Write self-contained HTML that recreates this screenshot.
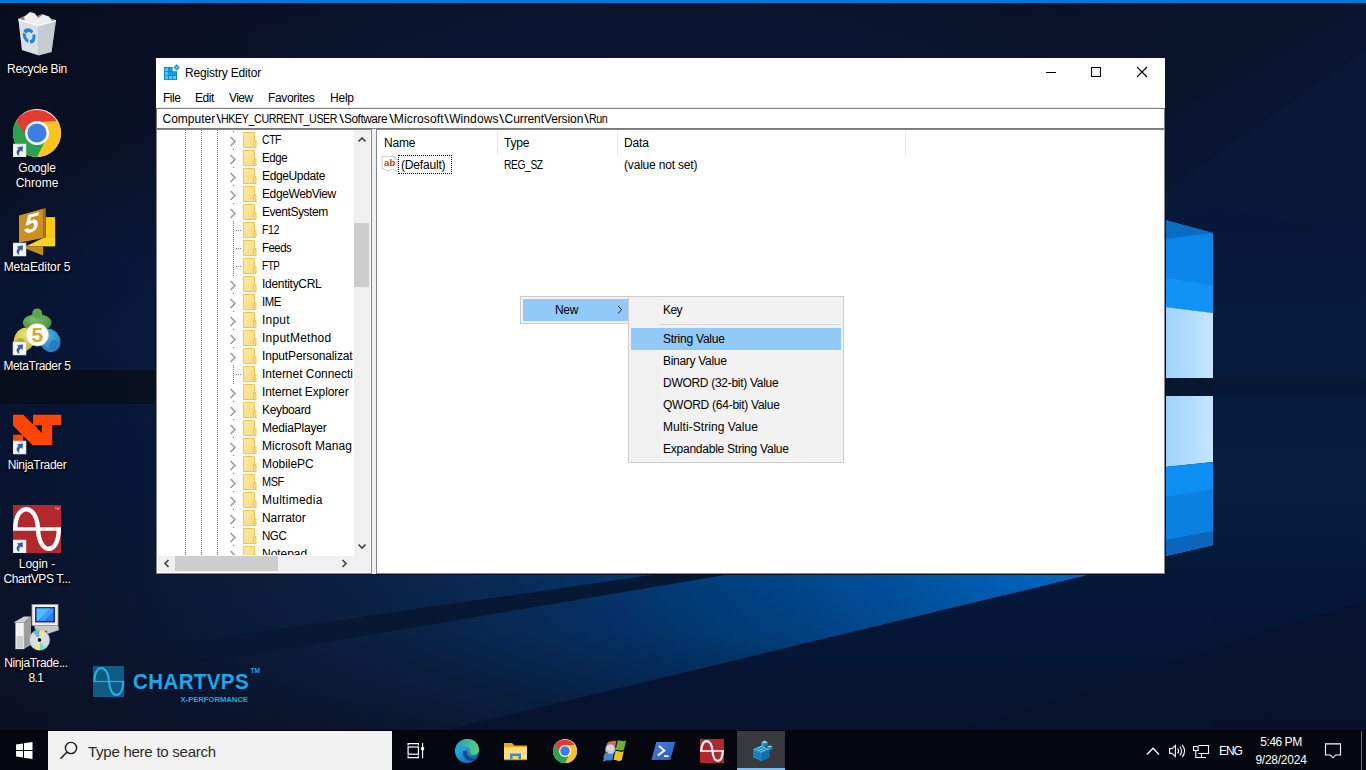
<!DOCTYPE html>
<html lang="en">
<head>
<meta charset="utf-8">
<title>Registry Editor</title>
<style>
html,body{margin:0;padding:0;}
html{width:1366px;height:770px;overflow:hidden;}
body{width:1366px;height:770px;overflow:hidden;position:relative;background:#0a1530;font-family:"Liberation Sans",sans-serif;font-size:12px;color:#000;letter-spacing:-0.18px;}
.abs{position:absolute;}
#wall{position:absolute;left:0;top:0;width:1366px;height:770px;}
#topbar{position:absolute;left:0;top:0;width:1366px;height:3px;background:#0078d4;}
/* desktop icons */
.dlabel{position:absolute;width:90px;text-align:center;color:#fff;font-size:12px;line-height:15px;text-shadow:0 1px 2px rgba(0,0,0,.9),0 0 3px rgba(0,0,0,.8),1px 1px 1px rgba(0,0,0,.9);letter-spacing:-0.1px;}
.dicon{position:absolute;}
/* window */
#win{position:absolute;left:155px;top:57px;width:1011px;height:518px;background:#fff;box-sizing:border-box;border:1px solid #10131c;}
#title{position:absolute;left:185px;top:64px;height:18px;line-height:18px;font-size:12px;}
.menu{position:absolute;top:89px;height:18px;line-height:18px;}
#addr{position:absolute;left:156px;top:108px;width:1009px;height:21px;box-sizing:border-box;border:1px solid #7a7a7a;background:#fff;}
#addr b{position:absolute;top:1px;line-height:19px;white-space:nowrap;font-weight:normal;transform-origin:0 50%;}
#addr b.bs{transform:scaleX(1.4);transform-origin:50% 50%;}
.pane{position:absolute;top:129px;height:445px;box-sizing:border-box;border:1px solid #828790;background:#fff;}
/* tree */
#tree{position:absolute;left:157px;top:130px;width:197px;height:425px;overflow:hidden;background:#fff;}
.row{position:absolute;left:0;height:18px;line-height:18px;white-space:nowrap;width:197px;overflow:hidden;}
.row span{position:absolute;left:105px;top:0;transform-origin:0 50%;}
.row svg.f{position:absolute;left:86px;top:1px;}
.row svg.c{position:absolute;left:72px;top:5px;}
.vd{position:absolute;top:0;width:1px;height:426px;background-image:linear-gradient(#7a7a7a 50%,transparent 50%);background-size:1px 2px;}
.cv{position:absolute;left:70px;top:1px;width:13px;height:16px;background:#fff;}
.hd{position:absolute;height:1px;width:6px;background-image:linear-gradient(90deg,#7a7a7a 50%,transparent 50%);background-size:2px 1px;}
/* scrollbars */
.sb{position:absolute;background:#f0f0f0;}
.th{position:absolute;background:#cdcdcd;}
/* list */
.hdr{position:absolute;top:134px;height:18px;line-height:18px;}
.hsep{position:absolute;top:131px;width:1px;height:24px;background:#e5e5e5;}
.cell{position:absolute;top:156px;height:18px;line-height:18px;white-space:nowrap;}
/* context menu */
.cm{position:absolute;background:#f2f2f2;border:1px solid #ccc;box-sizing:border-box;}
.mi{position:absolute;height:22px;line-height:22px;white-space:nowrap;}
.hl{position:absolute;background:#91c9f7;}
/* taskbar */
#tb{position:absolute;left:0;top:730px;width:1366px;height:40px;background:#04070d;}
#search{position:absolute;left:48px;top:731px;width:344px;height:39px;background:#f2f2f2;}
#search span{position:absolute;left:40px;top:1px;line-height:40px;font-size:15px;color:#2b2b2b;letter-spacing:-0.25px;}
.tray{position:absolute;color:#fff;font-size:12px;white-space:nowrap;letter-spacing:-0.2px;}
</style>
</head>
<body>
<svg id="wall" viewBox="0 0 1366 770" width="1366" height="770">
<defs>
<linearGradient id="bg" x1="0" y1="0" x2="0" y2="770" gradientUnits="userSpaceOnUse">
<stop offset="0" stop-color="#090e20"/><stop offset="0.19" stop-color="#0a1229"/><stop offset="0.26" stop-color="#0a1531"/><stop offset="0.34" stop-color="#09183a"/><stop offset="0.43" stop-color="#081a3c"/><stop offset="0.6" stop-color="#08183a"/><stop offset="0.73" stop-color="#0a1836"/><stop offset="0.95" stop-color="#0a1428"/>
</linearGradient>
<linearGradient id="leftdark" x1="0" y1="0" x2="160" y2="0" gradientUnits="userSpaceOnUse">
<stop offset="0" stop-color="#060a18" stop-opacity=".35"/><stop offset="1" stop-color="#060a18" stop-opacity="0"/>
</linearGradient>
<linearGradient id="beam" x1="1212" y1="0" x2="0" y2="0" gradientUnits="userSpaceOnUse">
<stop offset="0" stop-color="#0078dc"/><stop offset="0.105" stop-color="#0068c6"/><stop offset="0.175" stop-color="#005fb6"/><stop offset="0.257" stop-color="#00529f"/><stop offset="0.34" stop-color="#00478c"/><stop offset="0.422" stop-color="#013d7b"/><stop offset="0.505" stop-color="#053369"/><stop offset="0.587" stop-color="#082b58"/><stop offset="0.67" stop-color="#0a244a"/><stop offset="0.752" stop-color="#0a1e40"/><stop offset="0.876" stop-color="#0a1834"/><stop offset="1" stop-color="#0a132a"/>
</linearGradient>
<linearGradient id="beamshade" x1="0" y1="574" x2="0" y2="740" gradientUnits="userSpaceOnUse">
<stop offset="0" stop-color="#0a1022" stop-opacity="0"/><stop offset="0.35" stop-color="#0a1022" stop-opacity=".12"/><stop offset="0.7" stop-color="#0a1022" stop-opacity=".45"/><stop offset="1" stop-color="#0a1022" stop-opacity=".72"/>
</linearGradient>
<linearGradient id="right" x1="0" y1="200" x2="0" y2="730" gradientUnits="userSpaceOnUse">
<stop offset="0" stop-color="#08173a"/><stop offset="0.25" stop-color="#051a3c"/><stop offset="0.55" stop-color="#051d3e"/><stop offset="0.72" stop-color="#051839"/><stop offset="1" stop-color="#07112c"/>
</linearGradient>
<linearGradient id="rdark" x1="1000" y1="0" x2="1200" y2="0" gradientUnits="userSpaceOnUse"><stop offset="0" stop-color="#0a142d" stop-opacity="0"/><stop offset="1" stop-color="#0a142d" stop-opacity="1"/></linearGradient>
<linearGradient id="under" x1="0" y1="560" x2="0" y2="730" gradientUnits="userSpaceOnUse">
<stop offset="0" stop-color="#05193b"/><stop offset="1" stop-color="#07122e"/>
</linearGradient>
<linearGradient id="lite" x1="1165" y1="0" x2="1213" y2="0" gradientUnits="userSpaceOnUse">
<stop offset="0" stop-color="#9fd2fb"/><stop offset="1" stop-color="#c4e6ff"/>
</linearGradient>
<linearGradient id="stripe" x1="731" y1="0" x2="100" y2="0" gradientUnits="userSpaceOnUse">
<stop offset="0" stop-color="#061228" stop-opacity=".9"/><stop offset="0.5" stop-color="#061228" stop-opacity=".7"/><stop offset="1" stop-color="#061228" stop-opacity="0"/>
</linearGradient>
<radialGradient id="glowtop" cx="660" cy="45" r="540" gradientUnits="userSpaceOnUse" gradientTransform="translate(0,36) scale(1,0.2)">
<stop offset="0" stop-color="#0b1b40" stop-opacity="0.6"/><stop offset="0.5" stop-color="#0b1b40" stop-opacity="0.42"/><stop offset="1" stop-color="#0b1c42" stop-opacity="0"/>
</radialGradient>
</defs>
<rect width="1366" height="770" fill="url(#bg)"/>
<rect width="1366" height="180" fill="url(#glowtop)"/>
<rect x="0" y="370" width="1165" height="34" fill="#07101f"/>
<rect x="0" y="0" width="160" height="770" fill="url(#leftdark)"/>
<!-- right side -->
<polygon points="1165,200 1366,237 1366,730 1165,730" fill="url(#right)"/>
<polygon points="1000,0 1366,0 1366,237 1165,200 1000,200" fill="url(#rdark)"/>
<polygon points="1165,190 1366,50 1366,237 1165,200" fill="#0b1c44" opacity=".45"/>
<polygon points="1165,120 1366,3 1366,50 1165,190" fill="#0b1a3e" opacity=".25"/>
<rect x="1213" y="378" width="153" height="18" fill="#06142d" opacity=".4"/>
<!-- beam -->
<polygon points="1212,545 0,838 0,560 1212,470" fill="url(#beam)"/>
<polygon points="1212,545 0,838 0,560 1212,470" fill="url(#beamshade)"/>
<polygon points="658,574 731,574 0,697 0,669" fill="url(#stripe)"/>
<polygon points="1084,576 1213,545 1213,730 446,730" fill="url(#under)"/>
<polygon points="1366,600 1366,730 960,730" fill="#08122b" opacity=".6"/>
<!-- logo panes -->
<polygon points="1165,220 1213,233 1213,313 1165,307" fill="#0b86e8"/>
<polygon points="1165,220 1213,233 1165,239" fill="#0a6cc4"/>
<polygon points="1165,278 1213,285 1213,313 1165,307" fill="#1192f6"/>
<polygon points="1165,307 1213,313 1213,378 1165,378" fill="url(#lite)"/>
<rect x="1165" y="378" width="48" height="18" fill="#08162f"/>
<polygon points="1165,396 1213,396 1213,462 1165,467" fill="url(#lite)"/>
<polygon points="1165,467 1213,462 1213,545 1165,556" fill="#0c8ef2"/>
<polygon points="1165,497 1213,489 1213,545 1165,556" fill="#0a80e0"/>
<polygon points="1165,540 1213,531 1213,545 1165,556" fill="#0a66ba"/>
</svg>
<div id="topbar"></div>
<!-- shortcut arrow symbol -->
<svg width="0" height="0" style="position:absolute">
<defs>
<g id="sc"><rect x="0" y="0" width="13" height="13" fill="#f6f6f6" stroke="#d0d0d0" stroke-width=".6"/><path d="M3.9 3.4 L9.9 2.2 L9.6 8.1 L7.9 6.4 C6.3 7.6 5.6 9.6 6.3 11.9 C3 10.2 2.6 6.9 5.6 4.9 Z" fill="#2c5fae"/></g>
<linearGradient id="fold" x1="0" y1="0" x2="1" y2="1"><stop offset="0" stop-color="#fde9a4"/><stop offset="1" stop-color="#fbdc7c"/></linearGradient>
</defs>
</svg>

<!-- Recycle Bin -->
<svg class="dicon" style="left:13px;top:8px" width="48" height="50" viewBox="13 8 48 50">
<polygon points="18.5,18.5 29,14 33,12.5 37,16 42,14 47,17 56,20 51.5,52 38.7,55.5 22,50" fill="#e9ebee" opacity=".55"/>
<polygon points="24,17 30,12 35,13.5 38,18 43,14.5 49,16.5 52,21 39,25 25,21" fill="#eceef1"/>
<polygon points="18.3,18.8 38.7,24.5 38.7,55.3 22,50" fill="#e4e6ea" opacity=".92"/>
<polygon points="38.7,24.5 56,20 51.5,52 38.7,55.3" fill="#d0d3d9" opacity=".9"/>
<polygon points="18.3,18.8 38.7,24.5 56,20 55.6,21.6 38.7,26.2 18.6,20.4" fill="#fafafa"/>
<g fill="none" stroke="#1c86e4" stroke-width="3.3" transform="translate(29.2 35.9) skewY(13) scale(.92 1.08) translate(-29.2 -35.9)"><path d="M24.40 33.66 A5.3 5.3 0 0 1 32.61 31.84"/><path d="M34.00 33.66 A5.3 5.3 0 0 1 30.12 41.12"/><path d="M28.28 41.12 A5.3 5.3 0 0 1 24.08 34.53"/></g>
</svg>
<div class="dlabel" style="left:-8px;top:62px;letter-spacing:-0.32px">Recycle Bin</div>

<!-- Chrome -->
<svg class="dicon" style="left:13px;top:109px" width="48" height="48" viewBox="0 0 48 48">
<circle cx="24" cy="24" r="24" fill="#fff"/>
<path d="M24 13 L44.3 13 A24 24 0 0 0 3.2 12 L13.5 29.5 Z" fill="#e33b2e"/>
<path d="M33.5 29.5 L23.4 47.99 A24 24 0 0 0 44.8 12 L24 13 Z" fill="#fcc31e"/>
<path d="M14.5 29.5 L3.2 12 A24 24 0 0 0 24 48 L33.5 29.5 Z" fill="#2aa24b"/>
<circle cx="24" cy="24" r="12" fill="#fff"/>
<circle cx="24" cy="24" r="9.6" fill="#3b7ee6"/>
<use href="#sc" x="0" y="35"/>
</svg>
<div class="dlabel" style="left:-8px;top:161px"><span style="letter-spacing:-0.2px">Google</span><br><span style="letter-spacing:0">Chrome</span></div>

<!-- MetaEditor 5 -->
<svg class="dicon" style="left:13px;top:206px" width="48" height="52" viewBox="13 206 48 52">
<rect x="45.7" y="217.1" width="9.4" height="29.1" fill="#f8c90e"/>
<polygon points="26,246.2 43.1,237.9 55.1,237.9 55.1,246.2" fill="#fbd22c"/>
<polygon points="26,246.2 43.1,246.2 43.1,255.6 26,248.8" fill="#c98d16"/>
<polygon points="43.1,208.8 45.7,208.1 45.7,238 43.1,238" fill="#ad7614"/>
<polygon points="19,215.6 43.1,208.8 43.1,237.9 19,242.8" fill="#cd8f1e"/>
<text x="31.6" y="232" font-family="Liberation Sans,sans-serif" font-weight="bold" font-style="italic" font-size="26" fill="#fff" text-anchor="middle" transform="translate(31.6 226) skewY(-14) translate(-31.6 -226)" letter-spacing="0">5</text>
<use href="#sc" x="13" y="243"/>
</svg>
<div class="dlabel" style="left:-8px;top:260px;letter-spacing:-0.12px">MetaEditor 5</div>

<!-- MetaTrader 5 -->
<svg class="dicon" style="left:11px;top:306px" width="52" height="52" viewBox="11 306 52 52">
<defs><radialGradient id="mg" cx=".4" cy=".3" r=".8"><stop offset="0" stop-color="#7cbc68"/><stop offset="1" stop-color="#3f8a34"/></radialGradient>
<radialGradient id="my" cx=".4" cy=".3" r=".8"><stop offset="0" stop-color="#ece46c"/><stop offset="1" stop-color="#bdb034"/></radialGradient>
<radialGradient id="mb" cx=".5" cy=".3" r=".8"><stop offset="0" stop-color="#48b4ec"/><stop offset="1" stop-color="#1c72b4"/></radialGradient></defs>
<ellipse cx="24.4" cy="339.5" rx="10.2" ry="12.4" fill="url(#my)" transform="rotate(28 24.4 339.5)"/>
<circle cx="20.8" cy="342.6" r="4.4" fill="#b3a638"/>
<ellipse cx="49.9" cy="340.5" rx="10.2" ry="12" fill="url(#mb)" transform="rotate(-28 49.9 340.5)"/>
<circle cx="54" cy="344.7" r="4.6" fill="#2a7cbc"/>
<ellipse cx="37.2" cy="322.6" rx="14.3" ry="8.6" fill="url(#mg)"/>
<circle cx="37.2" cy="313.4" r="5" fill="#5aa64a"/>
<circle cx="37.2" cy="334.8" r="11.3" fill="#fff" stroke="#e0c890" stroke-width=".7"/>
<text x="37.4" y="342.4" font-family="Liberation Sans,sans-serif" font-weight="bold" font-size="21" fill="#e2a224" text-anchor="middle" letter-spacing="0">5</text>
<use href="#sc" x="13" y="342"/>
</svg>
<div class="dlabel" style="left:-8px;top:359px;letter-spacing:-0.37px">MetaTrader 5</div>

<!-- NinjaTrader -->
<svg class="dicon" style="left:13px;top:412px" width="49" height="46" viewBox="13 412 49 46">
<path fill-rule="evenodd" d="M13.05 414.7 H23.3 L33.1 424.5 V414.7 H61.3 V425.1 H52.2 V445 H32.4 L23 435.6 V445 H13.05 V434.7 H22.1 L13.05 425.6 Z M34.4 425.3 H41.8 V432.9 Z" fill="#ff4503"/>
<use href="#sc" x="13" y="441"/>
</svg>
<div class="dlabel" style="left:-8px;top:458px;letter-spacing:-0.32px">NinjaTrader</div>

<!-- ChartVPS login -->
<svg class="dicon" style="left:13px;top:505px" width="48" height="48" viewBox="0 0 48 48">
<rect width="48" height="48" fill="#b3282d"/>
<path d="M0 24 H48" stroke="#fff" stroke-width="3.4" fill="none"/>
<path d="M2.2 24 C2.2 -2.4 24 -2.4 25 24 C26 50.4 45.8 50.4 45.8 24" stroke="#fff" stroke-width="4.4" fill="none"/>
<text x="44" y="5.2" font-size="3.6" fill="#f0c0c0" text-anchor="middle" font-family="Liberation Sans,sans-serif">TM</text>
<use href="#sc" x="0" y="35"/>
</svg>
<div class="dlabel" style="left:-8px;top:557px"><span style="letter-spacing:-0.05px">Login -</span><br><span style="letter-spacing:-0.43px">ChartVPS T...</span></div>

<!-- NinjaTrader installer -->
<svg class="dicon" style="left:13px;top:603px" width="48" height="50" viewBox="13 603 48 50">
<polygon points="13.5,622.5 24,616.5 31,616.5 24,622.5" fill="#cfcfcf"/>
<polygon points="24,622.5 31,616.5 31,645 24,649" fill="#9c9c9c"/>
<rect x="15.5" y="622.5" width="8.5" height="26.5" fill="#f2f2f2" stroke="#a8a8a8" stroke-width=".5"/>
<rect x="16.5" y="636" width="6.5" height="12" fill="#cfcfcf"/>
<rect x="32" y="604.5" width="26" height="21" fill="#f0f0f0" stroke="#9a9a9a" stroke-width=".8"/>
<rect x="35" y="607" width="20" height="15.5" fill="#2424a8"/>
<rect x="36.6" y="608.4" width="16.8" height="12.6" fill="#2a7cf0"/>
<polygon points="36.6,608.4 50,608.4 38,621 36.6,621" fill="#4ad0f4" opacity=".85"/>
<polygon points="45,608.4 53.4,608.4 53.4,612 44,621 40,621" fill="#5ab4f8" opacity=".5"/>
<polygon points="34,625.5 58,625.5 59,630 47,634 47,631 36,631" fill="#c8c8c8" stroke="#8a8a8a" stroke-width=".5"/>
<circle cx="39.5" cy="640" r="10.2" fill="#d9dce2" stroke="#9a9ea6" stroke-width=".7"/>
<path d="M39.5 640 L33 632 A10.2 10.2 0 0 1 39.5 629.8 Z" fill="#58b8e8"/>
<path d="M39.5 640 L39.5 629.8 A10.2 10.2 0 0 1 45 631.4 Z" fill="#f0e878"/>
<path d="M39.5 640 L45.5 648.2 A10.2 10.2 0 0 1 39.5 650.2 Z" fill="#70e0d0"/>
<path d="M39.5 640 L39.5 650.2 A10.2 10.2 0 0 1 35 649.1 Z" fill="#f0e878"/>
<circle cx="39.5" cy="640" r="3" fill="#f4f4f4"/>
<circle cx="39.5" cy="640" r="1.9" fill="#111"/>
</svg>
<div class="dlabel" style="left:-9px;top:656px"><span style="letter-spacing:-0.35px">NinjaTrade...</span><br><span style="letter-spacing:-0.6px">8.1</span></div>

<!-- ChartVPS watermark -->
<svg class="abs" style="left:90px;top:662px" width="176" height="44" viewBox="90 662 176 44">
<rect x="93" y="666" width="31" height="31" fill="#0f5a80"/>
<path d="M93.5 681.5 H124" stroke="#22b0ee" stroke-width="1.3" fill="none"/>
<path d="M94.3 681.5 C94.3 663.5 108 663.5 109 681.5 C110 699.5 123.3 699.5 123.3 681.5" stroke="#22b0ee" stroke-width="2" fill="none"/>
<text x="133" y="689" font-family="Liberation Sans,sans-serif" font-weight="bold" font-size="21.5" fill="#1ea7e6" letter-spacing="0.4" textLength="116" lengthAdjust="spacingAndGlyphs">CHARTVPS</text>
<text x="250.5" y="672.5" font-family="Liberation Sans,sans-serif" font-weight="bold" font-size="6.5" fill="#1ea7e6" letter-spacing="0">TM</text>
<text x="180.5" y="702" font-family="Liberation Sans,sans-serif" font-weight="bold" font-size="7.2" fill="#1ea7e6" letter-spacing="0" textLength="67.5" lengthAdjust="spacingAndGlyphs">X-PERFORMANCE</text>
</svg>
<div id="win"></div>
<svg class="abs" style="left:163px;top:63px" width="18" height="18" viewBox="0 0 18 18">
<path d="M1 4 H9.6 V8.2 H14 V17 H1 Z" fill="#0b86cf"/>
<g fill="#53c9f7"><rect x="2" y="5" width="3.1" height="3.1"/><rect x="2" y="9.1" width="3.1" height="3.1"/><rect x="2" y="13.1" width="3.1" height="3.1"/><rect x="6" y="13.1" width="3.1" height="3.1"/><rect x="10" y="13.1" width="3.1" height="3.1"/></g>
<g fill="#0ea2e2"><rect x="6" y="5" width="3.1" height="3.1"/><rect x="6" y="9.1" width="3.1" height="3.1"/><rect x="10" y="9.1" width="3.1" height="3.1"/></g>
<rect x="11.9" y="2.7" width="3.4" height="3.4" transform="rotate(45 13.6 4.4)" fill="#53c9f7" stroke="#0b86cf" stroke-width="1"/>
</svg>
<div id="title">Registry Editor</div>
<svg class="abs" style="left:1040px;top:62px" width="116" height="20" viewBox="1040 62 116 20">
<path d="M1046 72.5 H1056" stroke="#000" stroke-width="1" fill="none"/>
<rect x="1091.5" y="67.5" width="9" height="9" stroke="#000" stroke-width="1" fill="none"/>
<path d="M1137 67 L1147 77 M1147 67 L1137 77" stroke="#000" stroke-width="1.1" fill="none"/>
</svg>
<div class="menu" style="left:163px;letter-spacing:-0.5px">File</div>
<div class="menu" style="left:195px;letter-spacing:-0.45px">Edit</div>
<div class="menu" style="left:229px;letter-spacing:-0.55px">View</div>
<div class="menu" style="left:268px;letter-spacing:-0.33px">Favorites</div>
<div class="menu" style="left:330px;letter-spacing:-0.23px">Help</div>
<div class="abs" style="left:156px;top:107px;width:1009px;height:1px;background:#f0f0f0"></div>
<div id="addr"><b style="left:5.5px;letter-spacing:0.00px">Computer</b><b class="bs" style="left:59.8px">\</b><b style="left:64.4px;letter-spacing:-0.45px;transform:scaleX(0.891)">HKEY_CURRENT_USER</b><b class="bs" style="left:182.6px">\</b><b style="left:187.1px;letter-spacing:-0.45px;transform:scaleX(0.984)">Software</b><b class="bs" style="left:232.5px">\</b><b style="left:236.8px;letter-spacing:0.14px">Microsoft</b><b class="bs" style="left:288.4px">\</b><b style="left:292.2px;letter-spacing:0.09px">Windows</b><b class="bs" style="left:343.2px">\</b><b style="left:347.6px;letter-spacing:-0.10px">CurrentVersion</b><b class="bs" style="left:427.9px">\</b><b style="left:432.3px;letter-spacing:-0.45px;transform:scaleX(0.890)">Run</b></div>
<div class="abs" style="left:156px;top:129px;width:1009px;height:445px;background:#f0f0f0"></div>
<div class="pane" style="left:156px;width:216px"></div>
<div class="pane" style="left:376px;width:789px"></div>
<div id="tree">
<div class="vd" style="left:28px"></div>
<div class="vd" style="left:44px"></div>
<div class="vd" style="left:60px"></div>
<div class="vd" style="left:76px;top:1px"></div>
<div class="row" style="top:1px"><i class="cv"></i><svg class="c" width="8" height="11" viewBox="0 0 8 11"><path d="M1.5 1 L6 5.5 L1.5 10" stroke="#a0a0a0" stroke-width="1.7" fill="none"/></svg><svg class="f" width="14" height="17" viewBox="0 0 14 17"><path d="M.5 .5 H11.5 V8.5 H13 V15.5 H.5 Z" fill="url(#fold)" stroke="#f0c64c" stroke-width="1"/><path d="M10.5 15 V9 H12.5" stroke="#f0c64c" stroke-width="1" fill="none"/></svg><span style="letter-spacing:-0.45px;transform:scaleX(0.869)">CTF</span></div>
<div class="row" style="top:19px"><i class="cv"></i><svg class="c" width="8" height="11" viewBox="0 0 8 11"><path d="M1.5 1 L6 5.5 L1.5 10" stroke="#a0a0a0" stroke-width="1.7" fill="none"/></svg><svg class="f" width="14" height="17" viewBox="0 0 14 17"><path d="M.5 .5 H11.5 V8.5 H13 V15.5 H.5 Z" fill="url(#fold)" stroke="#f0c64c" stroke-width="1"/><path d="M10.5 15 V9 H12.5" stroke="#f0c64c" stroke-width="1" fill="none"/></svg><span style="letter-spacing:-0.45px;transform:scaleX(0.959)">Edge</span></div>
<div class="row" style="top:37px"><i class="cv"></i><svg class="c" width="8" height="11" viewBox="0 0 8 11"><path d="M1.5 1 L6 5.5 L1.5 10" stroke="#a0a0a0" stroke-width="1.7" fill="none"/></svg><svg class="f" width="14" height="17" viewBox="0 0 14 17"><path d="M.5 .5 H11.5 V8.5 H13 V15.5 H.5 Z" fill="url(#fold)" stroke="#f0c64c" stroke-width="1"/><path d="M10.5 15 V9 H12.5" stroke="#f0c64c" stroke-width="1" fill="none"/></svg><span style="letter-spacing:-0.37px">EdgeUpdate</span></div>
<div class="row" style="top:55px"><i class="cv"></i><svg class="c" width="8" height="11" viewBox="0 0 8 11"><path d="M1.5 1 L6 5.5 L1.5 10" stroke="#a0a0a0" stroke-width="1.7" fill="none"/></svg><svg class="f" width="14" height="17" viewBox="0 0 14 17"><path d="M.5 .5 H11.5 V8.5 H13 V15.5 H.5 Z" fill="url(#fold)" stroke="#f0c64c" stroke-width="1"/><path d="M10.5 15 V9 H12.5" stroke="#f0c64c" stroke-width="1" fill="none"/></svg><span style="letter-spacing:-0.40px">EdgeWebView</span></div>
<div class="row" style="top:73px"><i class="cv"></i><svg class="c" width="8" height="11" viewBox="0 0 8 11"><path d="M1.5 1 L6 5.5 L1.5 10" stroke="#a0a0a0" stroke-width="1.7" fill="none"/></svg><svg class="f" width="14" height="17" viewBox="0 0 14 17"><path d="M.5 .5 H11.5 V8.5 H13 V15.5 H.5 Z" fill="url(#fold)" stroke="#f0c64c" stroke-width="1"/><path d="M10.5 15 V9 H12.5" stroke="#f0c64c" stroke-width="1" fill="none"/></svg><span style="letter-spacing:-0.45px">EventSystem</span></div>
<div class="row" style="top:91px"><i class="hd" style="left:79px;top:9px"></i><svg class="f" width="14" height="17" viewBox="0 0 14 17"><path d="M.5 .5 H11.5 V8.5 H13 V15.5 H.5 Z" fill="url(#fold)" stroke="#f0c64c" stroke-width="1"/><path d="M10.5 15 V9 H12.5" stroke="#f0c64c" stroke-width="1" fill="none"/></svg><span style="letter-spacing:-0.45px;transform:scaleX(0.884)">F12</span></div>
<div class="row" style="top:109px"><i class="hd" style="left:79px;top:9px"></i><svg class="f" width="14" height="17" viewBox="0 0 14 17"><path d="M.5 .5 H11.5 V8.5 H13 V15.5 H.5 Z" fill="url(#fold)" stroke="#f0c64c" stroke-width="1"/><path d="M10.5 15 V9 H12.5" stroke="#f0c64c" stroke-width="1" fill="none"/></svg><span style="letter-spacing:-0.45px;transform:scaleX(0.941)">Feeds</span></div>
<div class="row" style="top:127px"><i class="hd" style="left:79px;top:9px"></i><svg class="f" width="14" height="17" viewBox="0 0 14 17"><path d="M.5 .5 H11.5 V8.5 H13 V15.5 H.5 Z" fill="url(#fold)" stroke="#f0c64c" stroke-width="1"/><path d="M10.5 15 V9 H12.5" stroke="#f0c64c" stroke-width="1" fill="none"/></svg><span style="letter-spacing:-0.45px;transform:scaleX(0.822)">FTP</span></div>
<div class="row" style="top:145px"><i class="cv"></i><svg class="c" width="8" height="11" viewBox="0 0 8 11"><path d="M1.5 1 L6 5.5 L1.5 10" stroke="#a0a0a0" stroke-width="1.7" fill="none"/></svg><svg class="f" width="14" height="17" viewBox="0 0 14 17"><path d="M.5 .5 H11.5 V8.5 H13 V15.5 H.5 Z" fill="url(#fold)" stroke="#f0c64c" stroke-width="1"/><path d="M10.5 15 V9 H12.5" stroke="#f0c64c" stroke-width="1" fill="none"/></svg><span style="letter-spacing:-0.29px">IdentityCRL</span></div>
<div class="row" style="top:163px"><i class="cv"></i><svg class="c" width="8" height="11" viewBox="0 0 8 11"><path d="M1.5 1 L6 5.5 L1.5 10" stroke="#a0a0a0" stroke-width="1.7" fill="none"/></svg><svg class="f" width="14" height="17" viewBox="0 0 14 17"><path d="M.5 .5 H11.5 V8.5 H13 V15.5 H.5 Z" fill="url(#fold)" stroke="#f0c64c" stroke-width="1"/><path d="M10.5 15 V9 H12.5" stroke="#f0c64c" stroke-width="1" fill="none"/></svg><span style="letter-spacing:-0.45px;transform:scaleX(0.949)">IME</span></div>
<div class="row" style="top:181px"><i class="cv"></i><svg class="c" width="8" height="11" viewBox="0 0 8 11"><path d="M1.5 1 L6 5.5 L1.5 10" stroke="#a0a0a0" stroke-width="1.7" fill="none"/></svg><svg class="f" width="14" height="17" viewBox="0 0 14 17"><path d="M.5 .5 H11.5 V8.5 H13 V15.5 H.5 Z" fill="url(#fold)" stroke="#f0c64c" stroke-width="1"/><path d="M10.5 15 V9 H12.5" stroke="#f0c64c" stroke-width="1" fill="none"/></svg><span style="letter-spacing:0.22px">Input</span></div>
<div class="row" style="top:199px"><i class="cv"></i><svg class="c" width="8" height="11" viewBox="0 0 8 11"><path d="M1.5 1 L6 5.5 L1.5 10" stroke="#a0a0a0" stroke-width="1.7" fill="none"/></svg><svg class="f" width="14" height="17" viewBox="0 0 14 17"><path d="M.5 .5 H11.5 V8.5 H13 V15.5 H.5 Z" fill="url(#fold)" stroke="#f0c64c" stroke-width="1"/><path d="M10.5 15 V9 H12.5" stroke="#f0c64c" stroke-width="1" fill="none"/></svg><span style="letter-spacing:0.25px">InputMethod</span></div>
<div class="row" style="top:217px"><i class="cv"></i><svg class="c" width="8" height="11" viewBox="0 0 8 11"><path d="M1.5 1 L6 5.5 L1.5 10" stroke="#a0a0a0" stroke-width="1.7" fill="none"/></svg><svg class="f" width="14" height="17" viewBox="0 0 14 17"><path d="M.5 .5 H11.5 V8.5 H13 V15.5 H.5 Z" fill="url(#fold)" stroke="#f0c64c" stroke-width="1"/><path d="M10.5 15 V9 H12.5" stroke="#f0c64c" stroke-width="1" fill="none"/></svg><span style="letter-spacing:-0.13px">InputPersonalizat</span></div>
<div class="row" style="top:235px"><i class="hd" style="left:79px;top:9px"></i><svg class="f" width="14" height="17" viewBox="0 0 14 17"><path d="M.5 .5 H11.5 V8.5 H13 V15.5 H.5 Z" fill="url(#fold)" stroke="#f0c64c" stroke-width="1"/><path d="M10.5 15 V9 H12.5" stroke="#f0c64c" stroke-width="1" fill="none"/></svg><span style="letter-spacing:-0.03px">Internet Connecti</span></div>
<div class="row" style="top:253px"><i class="cv"></i><svg class="c" width="8" height="11" viewBox="0 0 8 11"><path d="M1.5 1 L6 5.5 L1.5 10" stroke="#a0a0a0" stroke-width="1.7" fill="none"/></svg><svg class="f" width="14" height="17" viewBox="0 0 14 17"><path d="M.5 .5 H11.5 V8.5 H13 V15.5 H.5 Z" fill="url(#fold)" stroke="#f0c64c" stroke-width="1"/><path d="M10.5 15 V9 H12.5" stroke="#f0c64c" stroke-width="1" fill="none"/></svg><span style="letter-spacing:-0.13px">Internet Explorer</span></div>
<div class="row" style="top:271px"><i class="cv"></i><svg class="c" width="8" height="11" viewBox="0 0 8 11"><path d="M1.5 1 L6 5.5 L1.5 10" stroke="#a0a0a0" stroke-width="1.7" fill="none"/></svg><svg class="f" width="14" height="17" viewBox="0 0 14 17"><path d="M.5 .5 H11.5 V8.5 H13 V15.5 H.5 Z" fill="url(#fold)" stroke="#f0c64c" stroke-width="1"/><path d="M10.5 15 V9 H12.5" stroke="#f0c64c" stroke-width="1" fill="none"/></svg><span style="letter-spacing:-0.34px">Keyboard</span></div>
<div class="row" style="top:289px"><i class="cv"></i><svg class="c" width="8" height="11" viewBox="0 0 8 11"><path d="M1.5 1 L6 5.5 L1.5 10" stroke="#a0a0a0" stroke-width="1.7" fill="none"/></svg><svg class="f" width="14" height="17" viewBox="0 0 14 17"><path d="M.5 .5 H11.5 V8.5 H13 V15.5 H.5 Z" fill="url(#fold)" stroke="#f0c64c" stroke-width="1"/><path d="M10.5 15 V9 H12.5" stroke="#f0c64c" stroke-width="1" fill="none"/></svg><span style="letter-spacing:-0.19px">MediaPlayer</span></div>
<div class="row" style="top:307px"><i class="cv"></i><svg class="c" width="8" height="11" viewBox="0 0 8 11"><path d="M1.5 1 L6 5.5 L1.5 10" stroke="#a0a0a0" stroke-width="1.7" fill="none"/></svg><svg class="f" width="14" height="17" viewBox="0 0 14 17"><path d="M.5 .5 H11.5 V8.5 H13 V15.5 H.5 Z" fill="url(#fold)" stroke="#f0c64c" stroke-width="1"/><path d="M10.5 15 V9 H12.5" stroke="#f0c64c" stroke-width="1" fill="none"/></svg><span style="letter-spacing:0.09px">Microsoft Manag</span></div>
<div class="row" style="top:325px"><i class="cv"></i><svg class="c" width="8" height="11" viewBox="0 0 8 11"><path d="M1.5 1 L6 5.5 L1.5 10" stroke="#a0a0a0" stroke-width="1.7" fill="none"/></svg><svg class="f" width="14" height="17" viewBox="0 0 14 17"><path d="M.5 .5 H11.5 V8.5 H13 V15.5 H.5 Z" fill="url(#fold)" stroke="#f0c64c" stroke-width="1"/><path d="M10.5 15 V9 H12.5" stroke="#f0c64c" stroke-width="1" fill="none"/></svg><span style="letter-spacing:-0.06px">MobilePC</span></div>
<div class="row" style="top:343px"><i class="cv"></i><svg class="c" width="8" height="11" viewBox="0 0 8 11"><path d="M1.5 1 L6 5.5 L1.5 10" stroke="#a0a0a0" stroke-width="1.7" fill="none"/></svg><svg class="f" width="14" height="17" viewBox="0 0 14 17"><path d="M.5 .5 H11.5 V8.5 H13 V15.5 H.5 Z" fill="url(#fold)" stroke="#f0c64c" stroke-width="1"/><path d="M10.5 15 V9 H12.5" stroke="#f0c64c" stroke-width="1" fill="none"/></svg><span style="letter-spacing:-0.45px;transform:scaleX(0.912)">MSF</span></div>
<div class="row" style="top:361px"><i class="cv"></i><svg class="c" width="8" height="11" viewBox="0 0 8 11"><path d="M1.5 1 L6 5.5 L1.5 10" stroke="#a0a0a0" stroke-width="1.7" fill="none"/></svg><svg class="f" width="14" height="17" viewBox="0 0 14 17"><path d="M.5 .5 H11.5 V8.5 H13 V15.5 H.5 Z" fill="url(#fold)" stroke="#f0c64c" stroke-width="1"/><path d="M10.5 15 V9 H12.5" stroke="#f0c64c" stroke-width="1" fill="none"/></svg><span style="letter-spacing:0.26px">Multimedia</span></div>
<div class="row" style="top:379px"><i class="cv"></i><svg class="c" width="8" height="11" viewBox="0 0 8 11"><path d="M1.5 1 L6 5.5 L1.5 10" stroke="#a0a0a0" stroke-width="1.7" fill="none"/></svg><svg class="f" width="14" height="17" viewBox="0 0 14 17"><path d="M.5 .5 H11.5 V8.5 H13 V15.5 H.5 Z" fill="url(#fold)" stroke="#f0c64c" stroke-width="1"/><path d="M10.5 15 V9 H12.5" stroke="#f0c64c" stroke-width="1" fill="none"/></svg><span style="letter-spacing:-0.05px">Narrator</span></div>
<div class="row" style="top:397px"><i class="cv"></i><svg class="c" width="8" height="11" viewBox="0 0 8 11"><path d="M1.5 1 L6 5.5 L1.5 10" stroke="#a0a0a0" stroke-width="1.7" fill="none"/></svg><svg class="f" width="14" height="17" viewBox="0 0 14 17"><path d="M.5 .5 H11.5 V8.5 H13 V15.5 H.5 Z" fill="url(#fold)" stroke="#f0c64c" stroke-width="1"/><path d="M10.5 15 V9 H12.5" stroke="#f0c64c" stroke-width="1" fill="none"/></svg><span style="letter-spacing:-0.45px;transform:scaleX(0.958)">NGC</span></div>
<div class="row" style="top:415px"><i class="cv"></i><svg class="c" width="8" height="11" viewBox="0 0 8 11"><path d="M1.5 1 L6 5.5 L1.5 10" stroke="#a0a0a0" stroke-width="1.7" fill="none"/></svg><svg class="f" width="14" height="17" viewBox="0 0 14 17"><path d="M.5 .5 H11.5 V8.5 H13 V15.5 H.5 Z" fill="url(#fold)" stroke="#f0c64c" stroke-width="1"/><path d="M10.5 15 V9 H12.5" stroke="#f0c64c" stroke-width="1" fill="none"/></svg><span style="letter-spacing:-0.03px">Notepad</span></div>
</div>
<div class="sb" style="left:354px;top:130px;width:16px;height:426px"></div>
<div class="th" style="left:354px;top:223px;width:15px;height:64px"></div>
<svg class="abs" style="left:354px;top:130px" width="17" height="426" viewBox="0 0 17 426"><path d="M4.5 11.5 L8 8 L11.5 11.5" stroke="#404040" stroke-width="1.6" fill="none"/><path d="M4.5 414.5 L8 418 L11.5 414.5" stroke="#404040" stroke-width="1.6" fill="none"/></svg>
<div class="sb" style="left:158px;top:556px;width:212px;height:16px"></div>
<div class="th" style="left:175px;top:556px;width:103px;height:15px"></div>
<svg class="abs" style="left:158px;top:556px" width="196" height="16" viewBox="0 0 196 16"><path d="M10.5 4 L7 7.5 L10.5 11" stroke="#404040" stroke-width="1.6" fill="none"/><path d="M184.5 4 L188 7.5 L184.5 11" stroke="#404040" stroke-width="1.6" fill="none"/></svg>
<div class="hdr" style="left:384px">Name</div>
<div class="hdr" style="left:504px">Type</div>
<div class="hdr" style="left:624px">Data</div>
<div class="hsep" style="left:497px"></div>
<div class="hsep" style="left:617px"></div>
<div class="hsep" style="left:905px"></div>
<svg class="abs" style="left:381px;top:155px" width="18" height="18" viewBox="0 0 18 18"><path d="M1.1 1.4 H13.2 L16.1 4.2 V16.3 C14.8 16.3 14 15.4 12.8 14.6 C11 13.6 9.6 15.4 7 15.6 C5 15.7 3.6 13.6 1.1 13.5 Z" fill="#fff" stroke="#bdbdbd" stroke-width=".8"/><path d="M13.2 1.4 V4.2 H16.1" fill="#f0f0f0" stroke="#bdbdbd" stroke-width=".7"/><text x="8.7" y="10.9" font-family="Liberation Sans,sans-serif" font-weight="bold" font-size="9.6" fill="#d83b01" text-anchor="middle" letter-spacing="0">ab</text></svg>
<div class="abs" style="left:398px;top:155px;width:54px;height:19px;box-sizing:border-box;border:1px dotted #000"></div>
<div class="cell" style="left:401px">(Default)</div>
<div class="cell" style="left:504px;letter-spacing:-0.45px;transform:scaleX(0.855);transform-origin:0 50%">REG_SZ</div>
<div class="cell" style="left:624px">(value not set)</div>
<div class="cm" style="left:520px;top:296px;width:112px;height:28px"></div>
<div class="hl" style="left:523px;top:299px;width:106px;height:22px"></div>
<div class="mi" style="left:555px;top:299px;letter-spacing:-0.3px">New</div>
<svg class="abs" style="left:615px;top:304px" width="10" height="12" viewBox="0 0 10 12"><path d="M3 2 L6.8 5.7 L3 9.4" stroke="#222" stroke-width="1" fill="none"/></svg>
<div class="cm" style="left:628px;top:296px;width:216px;height:167px"></div>
<div class="abs" style="left:631px;top:299px;width:28px;height:161px;background:#f0f0f0"></div>
<div class="abs" style="left:659px;top:324px;width:182px;height:1px;background:#d7d7d7"></div>
<div class="hl" style="left:631px;top:328px;width:210px;height:22px"></div>
<div class="mi" style="left:663px;top:299px;letter-spacing:-0.6px">Key</div>
<div class="mi" style="left:663px;top:328px;letter-spacing:-0.24px">String Value</div>
<div class="mi" style="left:663px;top:350px;letter-spacing:-0.3px">Binary Value</div>
<div class="mi" style="left:663px;top:372px;letter-spacing:-0.29px">DWORD (32-bit) Value</div>
<div class="mi" style="left:663px;top:394px;letter-spacing:-0.26px">QWORD (64-bit) Value</div>
<div class="mi" style="left:663px;top:416px;letter-spacing:0.06px">Multi-String Value</div>
<div class="mi" style="left:663px;top:438px;letter-spacing:-0.24px">Expandable String Value</div>
<div id="tb"></div>
<!-- start -->
<svg class="abs" style="left:16px;top:742px" width="17" height="17" viewBox="0 0 17 17"><g fill="#fff"><polygon points="0,2.4 7,1.4 7,8 0,8"/><polygon points="8,1.25 16.5,0 16.5,8 8,8"/><polygon points="0,9 7,9 7,15.6 0,14.6"/><polygon points="8,9 16.5,9 16.5,17 8,15.75"/></g></svg>
<div id="search"><span>Type here to search</span></div>
<svg class="abs" style="left:58px;top:740px" width="22" height="22" viewBox="0 0 22 22"><circle cx="13" cy="8" r="5.6" stroke="#1a1a1a" stroke-width="1.4" fill="none"/><path d="M9 12 L2.5 18.8" stroke="#1a1a1a" stroke-width="1.5" fill="none"/></svg>
<!-- task view -->
<svg class="abs" style="left:404px;top:740px" width="24" height="22" viewBox="404 740 24 22"><g stroke="#fff" stroke-width="1.2" fill="none"><path d="M408.1 745.6 V743.6 H418.4 V745.6"/><rect x="408.1" y="747" width="10.3" height="7.2"/><path d="M408.1 755.6 V757.6 H418.4 V755.6"/><path d="M422.6 743 V758.2" stroke-width="1.1"/></g><rect x="421.1" y="747.2" width="3" height="3" fill="#fff"/></svg>
<!-- edge -->
<svg class="abs" style="left:454px;top:738px" width="26" height="26" viewBox="0 0 26 26">
<defs><linearGradient id="eg1" x1="0" y1="0" x2="1" y2="1"><stop offset="0" stop-color="#35c1f1"/><stop offset=".5" stop-color="#1b8fd8"/><stop offset="1" stop-color="#0c59a4"/></linearGradient>
<linearGradient id="eg2" x1="0" y1="0" x2="1" y2="0"><stop offset="0" stop-color="#1d9ad8"/><stop offset="1" stop-color="#5ad36a"/></linearGradient></defs>
<circle cx="13" cy="13" r="12" fill="url(#eg1)"/>
<path d="M1.2 12 C2 5 7.5 1 13.5 1 C20 1 25 6 25 11.5 C25 15 22.5 17 19.5 17 C17 17 15.5 16 15.8 14.6 C16.4 13 16.5 10.6 13.5 9.6 C9.5 8.3 3.5 9 1.2 12 Z" fill="url(#eg2)"/>
<path d="M9.5 13 C8 17 11 22.5 17 22.8 C20 22.9 22.5 21.5 23.8 19.5 C21.5 21 17.5 20.8 15 18.5 C12.8 16.5 12.4 14.3 13.2 12.5 Z" fill="#0b4a8c"/>
</svg>
<!-- explorer -->
<svg class="abs" style="left:502px;top:738px" width="28" height="26" viewBox="0 0 28 26">
<path d="M2 5 H10 L12.5 7.5 H25 V20 H2 Z" fill="#e8a820"/>
<rect x="2" y="9" width="23" height="12" fill="#fcd462"/>
<path d="M2 21 H25 V10.5 H2 Z" fill="#ffdf7a"/>
<rect x="8" y="15.5" width="11" height="6.5" fill="#2d8fe0"/>
<rect x="10.5" y="18" width="6" height="4" fill="#fcd462"/>
<rect x="2" y="21" width="23" height="1.2" fill="#d89a18"/>
</svg>
<!-- chrome -->
<svg class="abs" style="left:553px;top:739px" width="24" height="24" viewBox="0 0 48 48">
<circle cx="24" cy="24" r="24" fill="#fff"/>
<path d="M24 13 L44.3 13 A24 24 0 0 0 3.2 12 L13.5 29.5 Z" fill="#e33b2e"/>
<path d="M33.5 29.5 L23.4 47.99 A24 24 0 0 0 44.8 12 L24 13 Z" fill="#fcc31e"/>
<path d="M14.5 29.5 L3.2 12 A24 24 0 0 0 24 48 L33.5 29.5 Z" fill="#2aa24b"/>
<circle cx="24" cy="24" r="12" fill="#fff"/>
<circle cx="24" cy="24" r="9.6" fill="#3b7ee6"/>
</svg>
<!-- tool: flag + magnifier -->
<svg class="abs" style="left:600px;top:738px" width="30" height="26" viewBox="600 738 30 26">
<path d="M607 743.5 C610 740 613 742 616.5 740.6 L614.6 750 C611.5 751.2 608.5 749.5 605 752.5 Z" fill="#e8642a"/>
<path d="M617.6 740.4 C620.5 739.6 622.5 742.5 626.2 740.2 L624 749.8 C620.8 751.8 618.4 749.4 615.6 750 Z" fill="#6cb33a"/>
<path d="M604.7 753.6 C608 751 610.6 752.8 614.3 751.3 L612.4 760 C609.4 761.4 606.4 759.4 603 762 Z" fill="#3a86dc"/>
<path d="M615.4 751.2 C618.2 750.6 620.6 753 623.8 751 L621.8 760 C618.6 762.2 616 759.6 613.4 760.2 Z" fill="#f2c21e"/>
<circle cx="610.5" cy="749" r="4.6" fill="#d4ecfc" fill-opacity=".85" stroke="#9fb4c8" stroke-width="1.2"/>
<path d="M607.2 752.6 L604.2 756.8" stroke="#8a7a62" stroke-width="1.8" stroke-linecap="round"/>
</svg>
<!-- powershell -->
<svg class="abs" style="left:650px;top:740px" width="27" height="22" viewBox="650 740 27 22">
<defs><linearGradient id="psg" x1="0" y1="0" x2="1" y2="1"><stop offset="0" stop-color="#4a80e4"/><stop offset="1" stop-color="#2758bc"/></linearGradient></defs>
<polygon points="656.4,742 675.2,742 670.4,760 651.4,760" fill="url(#psg)"/>
<path d="M659 746 L664.4 750.6 L657.8 755.6" stroke="#fff" stroke-width="1.9" fill="none"/>
<path d="M664 756.2 H668.6" stroke="#fff" stroke-width="1.7" fill="none"/>
</svg>
<!-- chartvps -->
<svg class="abs" style="left:700px;top:739px" width="24" height="24" viewBox="0 0 48 48">
<rect width="48" height="48" fill="#b3282d"/>
<path d="M0 24 H48" stroke="#fff" stroke-width="3" fill="none"/>
<path d="M2.4 24 C2.4 -2.4 24 -2.4 25 24 C26 50.4 45.6 50.4 45.6 24" stroke="#fff" stroke-width="4.2" fill="none"/>
</svg>
<!-- regedit active -->
<div class="abs" style="left:737px;top:731px;width:48px;height:39px;background:#38393c"></div>
<div class="abs" style="left:737px;top:768px;width:48px;height:2px;background:#80bdee"></div>
<svg class="abs" style="left:750px;top:737px" width="26" height="28" viewBox="750 737 26 28">
<polygon points="753.3,749.2 761.3,745.4 769.4,749.2 761.3,753" fill="#5ccdf4"/>
<polygon points="753.3,749.2 761.3,753 761.3,761.2 753.3,757.4" fill="#1e96d8"/>
<polygon points="761.3,753 769.4,749.2 769.4,757.4 761.3,761.2" fill="#157ab8"/>
<path d="M753.3 751.9 L761.3 755.7 L769.4 751.9 M753.3 754.6 L761.3 758.4 L769.4 754.6 M756 750.5 V758.7 M758.7 751.8 V760 M764 751.8 V760 M766.7 750.5 V758.7 M756 748 L764 751.8 M758.7 746.7 L766.7 750.5 M766.7 748 L758.7 751.8 M764 746.7 L756 750.5" stroke="#0f5f9a" stroke-width=".6" fill="none"/>
<polygon points="761.2,742.2 764.6,740.6 768,742.2 764.6,743.8" fill="#7ddcf8"/><polygon points="761.2,742.2 764.6,743.8 764.6,747 761.2,745.4" fill="#2a9bd8"/><polygon points="764.6,743.8 768,742.2 768,745.4 764.6,747" fill="#1b7ebc"/>
<polygon points="767.2,746.6 769.8,745.4 772.4,746.6 769.8,747.8" fill="#7ddcf8"/><polygon points="767.2,746.6 769.8,747.8 769.8,750.4 767.2,749.2" fill="#2a9bd8"/><polygon points="769.8,747.8 772.4,746.6 772.4,749.2 769.8,750.4" fill="#1b7ebc"/>
</svg>
<!-- tray -->
<svg class="abs" style="left:1144px;top:742px" width="70" height="18" viewBox="1144 742 70 18">
<path d="M1147 754.5 L1153 748.2 L1159 754.5" stroke="#fff" stroke-width="1.3" fill="none"/>
<g stroke="#fff" stroke-width="1.1" fill="none"><path d="M1169.6 748.6 H1172 L1175.4 745.4 V756.6 L1172 753.4 H1169.6 Z"/><path d="M1177.6 748.6 C1178.8 750 1178.8 752 1177.6 753.4"/><path d="M1179.8 746.6 C1182 749 1182 753 1179.8 755.4"/><path d="M1182 744.8 C1185.4 748.4 1185.4 753.6 1182 757.2"/></g>
<g stroke="#fff" stroke-width="1.1" fill="none"><path d="M1198.5 745.5 H1208.5 V753.5 H1198.5"/><rect x="1193.5" y="746.5" width="4.6" height="4"/><path d="M1195.8 750.5 V757.5 H1206 M1201.5 753.5 V757.5"/></g>
</svg>
<div class="tray" style="left:1219px;top:744px;line-height:14px;letter-spacing:-1.1px">ENG</div>
<div class="tray" style="left:1231px;top:735px;width:100px;text-align:center;line-height:14px;letter-spacing:-0.48px">5:46 PM</div>
<div class="tray" style="left:1231px;top:753px;width:100px;text-align:center;line-height:14px;letter-spacing:-0.24px">9/28/2024</div>
<svg class="abs" style="left:1323px;top:741px" width="20" height="20" viewBox="0 0 20 20"><path d="M2.5 2.9 H17.5 V14 H12.6 L10 16.8 L7.4 14 H2.5 Z" stroke="#fff" stroke-width="1.1" fill="none"/></svg>
<div class="abs" style="left:1361px;top:731px;width:1px;height:39px;background:#6a6d72"></div>
</body></html>
